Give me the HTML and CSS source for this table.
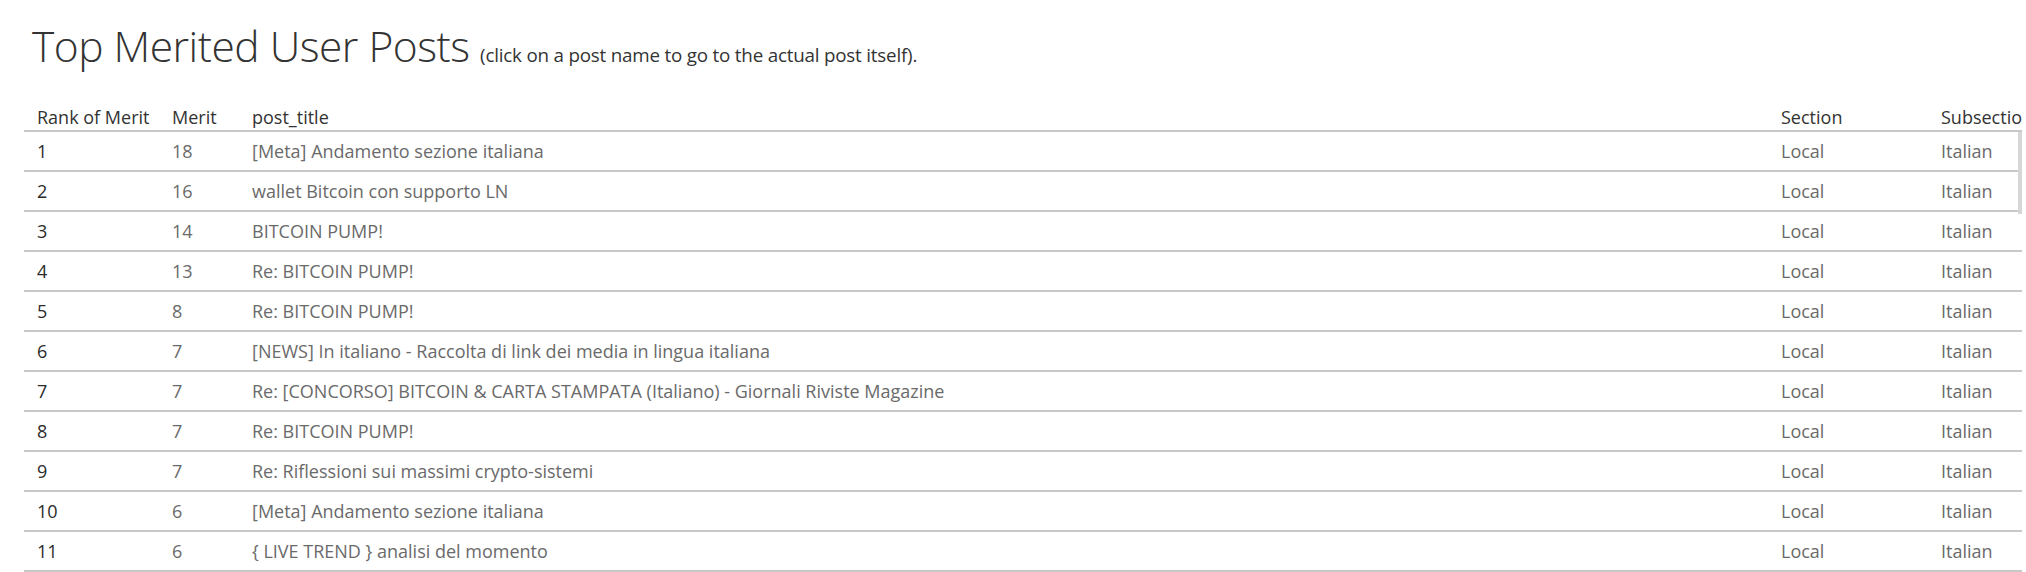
FILE: index.html
```html
<!DOCTYPE html>
<html>
<head>
<meta charset="utf-8">
<link rel="stylesheet" href="styles.css">
</head>
<body>
<div class="page">
  <h1 class="title">Top Merited User Posts <span class="sub">(click on a post name to go to the actual post itself).</span></h1>
  <div class="table">
    <div class="row head">
      <div>Rank of Merit</div><div>Merit</div><div>post_title</div><div>Section</div><div>Subsection</div>
    </div>
    <div class="body">
      <div class="row"><div class="rank">1</div><div>18</div><div>[Meta] Andamento sezione italiana</div><div>Local</div><div>Italian</div></div>
      <div class="row"><div class="rank">2</div><div>16</div><div>wallet Bitcoin con supporto LN</div><div>Local</div><div>Italian</div></div>
      <div class="row"><div class="rank">3</div><div>14</div><div>BITCOIN PUMP!</div><div>Local</div><div>Italian</div></div>
      <div class="row"><div class="rank">4</div><div>13</div><div>Re: BITCOIN PUMP!</div><div>Local</div><div>Italian</div></div>
      <div class="row"><div class="rank">5</div><div>8</div><div>Re: BITCOIN PUMP!</div><div>Local</div><div>Italian</div></div>
      <div class="row"><div class="rank">6</div><div>7</div><div>[NEWS] In italiano - Raccolta di link dei media in lingua italiana</div><div>Local</div><div>Italian</div></div>
      <div class="row"><div class="rank">7</div><div>7</div><div>Re: [CONCORSO] BITCOIN &amp; CARTA STAMPATA (Italiano) - Giornali Riviste Magazine</div><div>Local</div><div>Italian</div></div>
      <div class="row"><div class="rank">8</div><div>7</div><div>Re: BITCOIN PUMP!</div><div>Local</div><div>Italian</div></div>
      <div class="row"><div class="rank">9</div><div>7</div><div>Re: Riflessioni sui massimi crypto-sistemi</div><div>Local</div><div>Italian</div></div>
      <div class="row"><div class="rank">10</div><div>6</div><div>[Meta] Andamento sezione italiana</div><div>Local</div><div>Italian</div></div>
      <div class="row"><div class="rank">11</div><div>6</div><div>{ LIVE TREND } analisi del momento</div><div>Local</div><div>Italian</div></div>
      <div class="scroll"></div>
    </div>
  </div>
</div>
</body>
</html>
```
FILE: styles.css
```css
html, body {
  margin: 0;
  padding: 0;
  background: #fff;
  overflow: hidden;
}
.page {
  width: 2026px;
  height: 572px;
  overflow: hidden;
  font-family: "Open Sans", "Noto Sans", sans-serif;
}
.title {
  margin: 0;
  padding: 18px 0 0 32px;
  height: 76px;
  font-size: 42.5px;
  font-weight: 300;
  color: #333;
  line-height: 56px;
  letter-spacing: -0.5px;
  white-space: nowrap;
}
.sub {
  font-size: 18.8px;
  font-weight: 400;
  letter-spacing: -0.2px;
  color: #333;
}
.table {
  margin-left: 24px;
  width: 1998px;
  overflow: hidden;
}
.row {
  display: grid;
  grid-template-columns: 135px 80px 1529px 160px 200px;
  height: 38px;
  border-bottom: 2px solid #c8c8c8;
  align-items: center;
  font-size: 18px;
  color: #6a6a6a;
  white-space: nowrap;
}
.row > div {
  padding-left: 13px;
  overflow: hidden;
}
.row.head {
  height: 36px;
  color: #333;
  font-weight: 500;
  align-items: end;
  font-size: 18px;
}
.row.head > div {
  padding-bottom: 1px;
}
.rank {
  color: #2b2b2b;
  font-weight: 500;
}
.body {
  position: relative;
}
.scroll {
  position: absolute;
  right: 0;
  top: 0;
  width: 4px;
  height: 82px;
  background: #d6d6d6;
}
```
